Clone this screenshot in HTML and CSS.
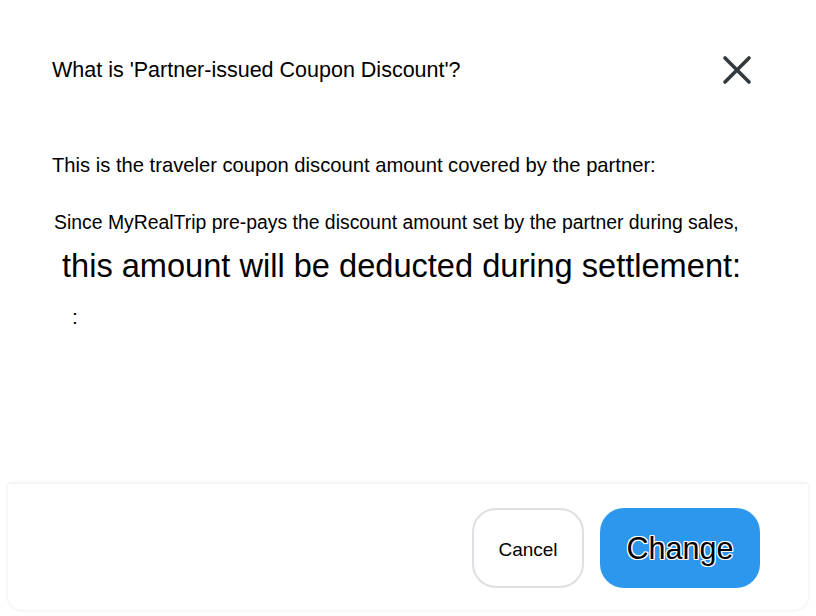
FILE: index.html
```html
<!DOCTYPE html>
<html lang="en">
<head>
<meta charset="utf-8">
<title>Partner-issued Coupon Discount</title>
<link rel="stylesheet" href="styles.css">
</head>
<body>
<div class="modal">
  <header class="modal-header">
    <h1 class="modal-title">What is 'Partner-issued Coupon Discount'?</h1>
    <button class="close-btn" aria-label="Close">
      <svg width="30" height="30" viewBox="0 0 30 30"><path d="M3 3 L27 27 M27 3 L3 27" stroke="#33383d" stroke-width="3.6" stroke-linecap="round" fill="none"/></svg>
    </button>
  </header>
  <div class="modal-body">
    <p class="lead">This is the traveler coupon discount amount covered by the partner:</p>
    <p class="note">Since MyRealTrip pre-pays the discount amount set by the partner during sales,</p>
    <p class="big">this amount will be deducted during settlement:</p>
    <p class="colon">:</p>
  </div>
  <footer class="modal-footer">
    <button class="btn btn-cancel">Cancel</button>
    <button class="btn btn-change">Change</button>
  </footer>
</div>
</body>
</html>
```
FILE: styles.css
```css
html, body {
  margin: 0;
  padding: 0;
  background: #ffffff;
}
body {
  font-family: "Liberation Sans", Arial, sans-serif;
  color: #000;
  width: 816px;
  height: 616px;
  overflow: hidden;
}
.modal {
  display: flex;
  flex-direction: column;
  height: 616px;
}
.modal-header {
  display: flex;
  align-items: center;
  justify-content: space-between;
  padding: 54px 64px 0 52px;
  height: 32px;
}
.modal-title {
  margin: 0;
  font-size: 21.5px;
  font-weight: normal;
  line-height: 32px;
  white-space: nowrap;
}
.close-btn {
  border: 0;
  background: none;
  padding: 0;
  width: 30px;
  height: 30px;
  display: flex;
}
.modal-body {
  flex: 1;
  padding: 0 0 0 52px;
}
.modal-body p {
  white-space: nowrap;
}
.lead {
  margin: 67px 0 0 0;
  font-size: 20.2px;
  line-height: 24px;
}
.note {
  margin: 33px 0 0 2px;
  font-size: 19.4px;
  line-height: 24px;
}
.big {
  margin: 12px 0 0 10px;
  font-size: 32.6px;
  line-height: 40px;
}
.colon {
  margin: 16px 0 0 20px;
  font-size: 21px;
  line-height: 30px;
}
.modal-footer {
  margin: 0 8px 6px 8px;
  height: 126px;
  box-sizing: border-box;
  padding: 24px 48px 0 0;
  display: flex;
  justify-content: flex-end;
  align-items: flex-start;
  gap: 16px;
  background: #fff;
  border-radius: 0 0 14px 14px;
  box-shadow: 0 -1px 4px rgba(0,0,0,0.08), 0 1px 3px rgba(0,0,0,0.03);
}
.btn {
  height: 80px;
  border-radius: 24px;
  font-family: "Liberation Sans", Arial, sans-serif;
  cursor: pointer;
}
.btn-cancel {
  width: 112px;
  background: #fff;
  border: 2px solid #dcdfe3;
  padding: 4px 0 0 0;
  font-size: 19px;
  color: #000;
}
.btn-change {
  width: 160px;
  background: #2d97ee;
  border: 0;
  font-size: 30.5px;
  color: #000;
  text-shadow: 1px 0 0 #fff, -1px 0 0 #fff, 0 1px 0 #fff, 0 -1px 0 #fff, 1px 1px 0 #fff, -1px -1px 0 #fff, 1px -1px 0 #fff, -1px 1px 0 #fff;
}
```
